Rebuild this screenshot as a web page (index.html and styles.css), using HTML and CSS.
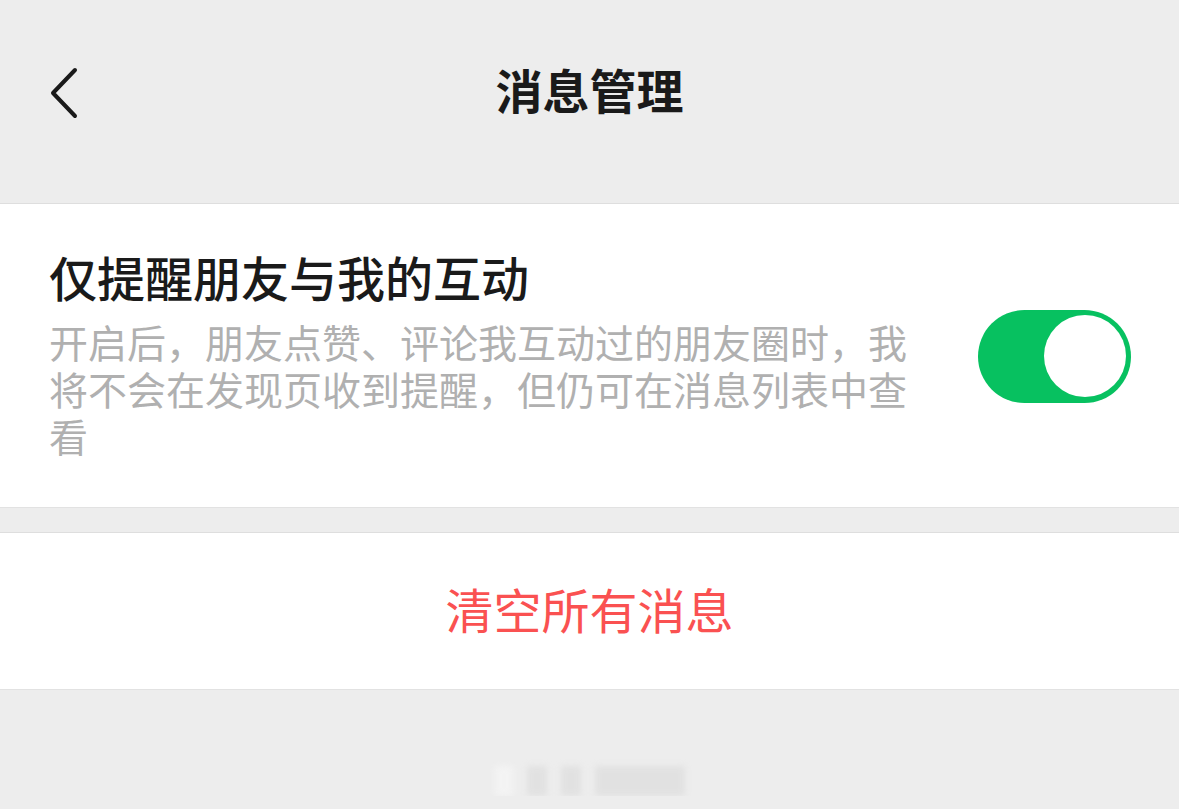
FILE: index.html
```html
<!DOCTYPE html>
<html lang="zh-CN">
<head>
    <meta charset="UTF-8">
    <meta name="viewport" content="width=device-width, initial-scale=1.0">
    <title>消息管理</title>
    <link rel="stylesheet" href="styles.css">
</head>
<body>
    <header class="nav-bar">
        <a href="#" class="back-btn">
            <svg width="40" height="60" viewBox="0 0 40 60">
                <polyline points="25,4 3,27 25,50" fill="none" stroke="#1a1a1a" stroke-width="4" stroke-linecap="round" stroke-linejoin="round"/>
            </svg>
        </a>
        <h1>消息管理</h1>
    </header>
    <main>
        <section class="card setting-row">
            <div class="setting-text">
                <div class="setting-title">仅提醒朋友与我的互动</div>
                <p class="setting-desc">开启后，朋友点赞、评论我互动过的朋友圈时，我将不会在发现页收到提醒，但仍可在消息列表中查看</p>
            </div>
            <div class="switch on">
                <span class="knob"></span>
            </div>
        </section>
        <section class="card danger-row">
            <a href="#" class="danger-btn">清空所有消息</a>
        </section>
        <div class="watermark">
            <span class="wm-a"></span>
            <span class="wm-b"></span>
            <span class="wm-b"></span>
            <span class="wm-c"></span>
        </div>
    </main>
</body>
</html>
```

FILE: styles.css
```css
body {
    margin: 0;
    padding: 0;
    background-color: #ededed;
    font-family: "Noto Sans CJK SC", "Liberation Sans", sans-serif;
    color: #191919;
}

.nav-bar {
    position: relative;
    height: 178px;
    padding-bottom: 8px;
    display: flex;
    align-items: center;
    justify-content: center;
}

.nav-bar h1 {
    margin: 0;
    font-size: 47px;
    font-weight: 600;
    line-height: 56px;
    color: #1a1a1a;
}

.back-btn {
    position: absolute;
    left: 50px;
    top: 66px;
    display: block;
    width: 40px;
    height: 60px;
}

.card {
    background-color: #fff;
    border-top: 1px solid #dedede;
    border-bottom: 1px solid #e2e2e2;
}

.setting-row {
    margin-top: 17px;
    display: flex;
    align-items: center;
    justify-content: space-between;
    padding: 44px 48px 48px 49px;
}

.setting-text {
    width: 870px;
}

.setting-title {
    font-size: 48px;
    font-weight: 500;
    line-height: 56px;
    color: #1a1a1a;
}

.setting-desc {
    margin: 14px 0 0;
    font-size: 39px;
    line-height: 47px;
    color: #b0b0b0;
}

.switch {
    width: 153px;
    height: 93px;
    margin-top: 5px;
    border-radius: 47px;
    background-color: #e5e5e5;
    display: flex;
    align-items: center;
    padding: 0 5px;
    box-sizing: border-box;
}

.switch.on {
    background-color: #07c160;
    justify-content: flex-end;
}

.knob {
    width: 82px;
    height: 82px;
    border-radius: 50%;
    background-color: #fff;
}

.danger-row {
    margin-top: 24px;
    height: 150px;
    padding-bottom: 6px;
    display: flex;
    align-items: center;
    justify-content: center;
}

.danger-btn {
    font-size: 48px;
    line-height: 56px;
    color: #fa5151;
    text-decoration: none;
}

.watermark {
    display: flex;
    justify-content: center;
    align-items: flex-end;
    gap: 14px;
    margin-top: 70px;
    height: 36px;
    filter: blur(3px);
    opacity: 0.5;
}

.watermark span {
    display: block;
    height: 30px;
    background-color: #d6d6d6;
}

.wm-a {
    width: 18px;
    background-color: #fafafa !important;
}

.wm-b {
    width: 20px;
}

.wm-c {
    width: 90px;
}
```
